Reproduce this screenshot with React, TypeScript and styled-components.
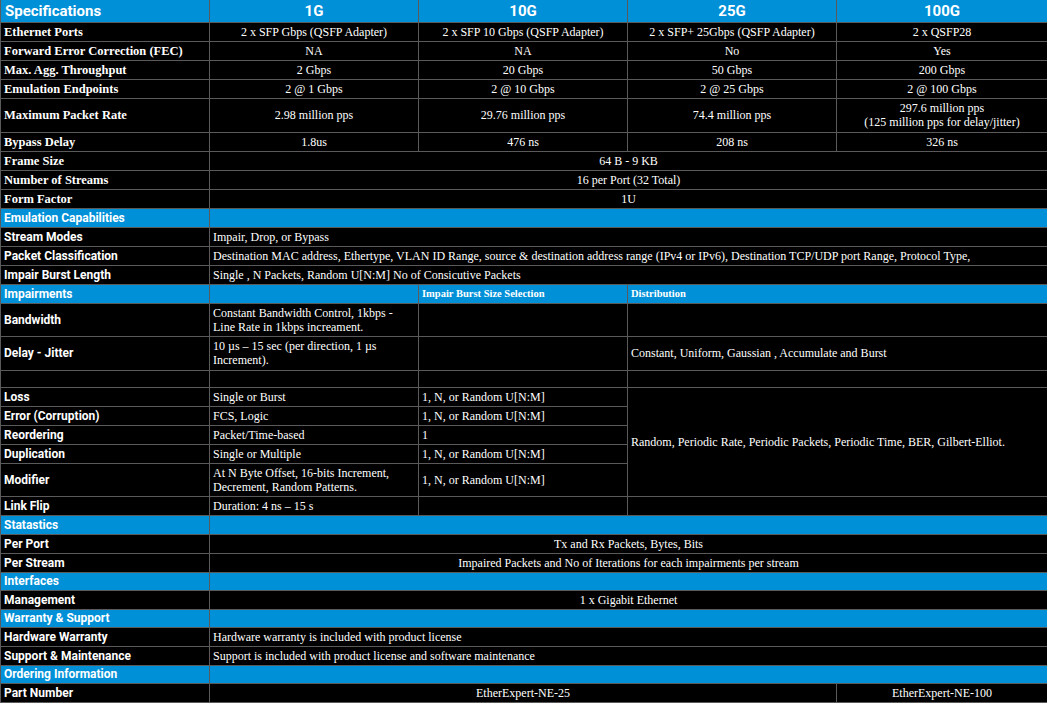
import React from "react";
import styled, { createGlobalStyle } from "styled-components";

const Global = createGlobalStyle`
  body { margin: 0; background: #fff; }
`;

const Table = styled.table`
  width: 1047px;
  table-layout: fixed;
  border-collapse: collapse;
  background: #000;
  color: #fff;
`;

const Row = styled.tr<{ $h?: number }>`
  height: ${p => p.$h ?? 19}px;
`;

const Cell = styled.td<{ $left?: boolean; $bold?: boolean }>`
  border: 1px solid #5a5a5a;
  padding: 0 3px;
  font-family: "Liberation Serif", serif;
  font-size: 12px;
  line-height: 14px;
  text-align: ${p => (p.$left ? "left" : "center")};
  font-weight: ${p => (p.$bold ? 700 : 400)};
  vertical-align: middle;
  overflow: hidden;
`;

const Label = styled(Cell)<{ $sans?: boolean }>`
  text-align: left;
  font-weight: 700;
  font-family: ${p => (p.$sans ? `Roboto, "Liberation Sans", sans-serif` : `"Liberation Serif", serif`)};
  font-size: ${p => (p.$sans ? "12px" : "12.5px")};
  white-space: nowrap;
`;

const Head = styled.td<{ $left?: boolean }>`
  background: #0090d8;
  border: 1px solid #5a5a5a;
  border-top: none;
  padding: 0 4px;
  font-family: Roboto, "Liberation Sans", sans-serif;
  font-weight: 700;
  font-size: 15px;
  text-align: ${p => (p.$left ? "left" : "center")};
`;

const Section = styled.td<{ $serif?: boolean }>`
  background: #0090d8;
  border: 1px solid #5a5a5a;
  padding: 0 3px;
  font-family: ${p => (p.$serif ? `"Liberation Serif", serif` : `Roboto, "Liberation Sans", sans-serif`)};
  font-weight: 700;
  font-size: ${p => (p.$serif ? "10.5px" : "12px")};
  text-align: left;
`;

const top: [string, string[] | string, number?][] = [
  ["Ethernet Ports", ["2 x SFP Gbps (QSFP Adapter)", "2 x SFP 10 Gbps (QSFP Adapter)", "2 x SFP+ 25Gbps (QSFP Adapter)", "2 x QSFP28"]],
  ["Forward Error Correction (FEC)", ["NA", "NA", "No", "Yes"]],
  ["Max. Agg. Throughput", ["2 Gbps", "20 Gbps", "50 Gbps", "200 Gbps"]],
  ["Emulation Endpoints", ["2 @ 1 Gbps", "2 @ 10 Gbps", "2 @ 25 Gbps", "2 @ 100 Gbps"]],
  ["Maximum Packet Rate", ["2.98 million pps", "29.76 million pps", "74.4 million pps", "297.6  million pps\n(125 million pps for delay/jitter)"], 34],
  ["Bypass Delay", ["1.8us", "476 ns", "208 ns", "326 ns"]],
  ["Frame Size", "64 B - 9 KB"],
  ["Number of Streams", "16 per Port (32 Total)"],
  ["Form Factor", "1U"],
];

const SectionRow = ({ title, h = 19 }: { title: string; h?: number }) => (
  <Row $h={h}>
    <Section>{title}</Section>
    <Section colSpan={4} />
  </Row>
);

const LeftRow = ({ label, text }: { label: string; text: string }) => (
  <Row>
    <Label $sans>{label}</Label>
    <Cell colSpan={4} $left>{text}</Cell>
  </Row>
);

const CenterRow = ({ label, text }: { label: string; text: string }) => (
  <Row>
    <Label $sans>{label}</Label>
    <Cell colSpan={4}>{text}</Cell>
  </Row>
);

const rnd = "1, N, or Random U[N:M]";

export default function App() {
  return (
    <>
      <Global />
      <Table>
        <colgroup>
          <col style={{ width: 209 }} />
          <col style={{ width: 209 }} />
          <col style={{ width: 209 }} />
          <col style={{ width: 209 }} />
          <col style={{ width: 211 }} />
        </colgroup>
        <tbody>
          <Row $h={22}>
            <Head $left>Specifications</Head>
            <Head>1G</Head>
            <Head>10G</Head>
            <Head>25G</Head>
            <Head>100G</Head>
          </Row>
          {top.map(([label, vals, h]) => (
            <Row key={label} $h={h}>
              <Label>{label}</Label>
              {Array.isArray(vals) ? (
                vals.map((v, i) => (
                  <Cell key={i} style={{ whiteSpace: "pre-line" }}>{v}</Cell>
                ))
              ) : (
                <Cell colSpan={4}>{vals}</Cell>
              )}
            </Row>
          ))}
          <SectionRow title="Emulation Capabilities" />
          <LeftRow label="Stream Modes" text="Impair, Drop, or Bypass" />
          <LeftRow
            label="Packet Classification"
            text="Destination MAC address, Ethertype, VLAN ID Range, source & destination address range (IPv4 or IPv6), Destination TCP/UDP port Range, Protocol Type,"
          />
          <LeftRow label="Impair Burst Length" text="Single , N Packets, Random U[N:M] No of Consicutive Packets" />
          <Row>
            <Section>Impairments</Section>
            <Section />
            <Section $serif>Impair Burst Size Selection</Section>
            <Section $serif colSpan={2}>Distribution</Section>
          </Row>
          <Row $h={33}>
            <Label $sans>Bandwidth</Label>
            <Cell $left>Constant Bandwidth Control, 1kbps - Line Rate in 1kbps increament.</Cell>
            <Cell />
            <Cell colSpan={2} />
          </Row>
          <Row $h={34}>
            <Label $sans>Delay - Jitter</Label>
            <Cell $left>10 µs – 15 sec (per direction, 1 µs Increment).</Cell>
            <Cell />
            <Cell colSpan={2} $left>Constant, Uniform, Gaussian , Accumulate and Burst</Cell>
          </Row>
          <Row $h={17}>
            <Cell />
            <Cell />
            <Cell />
            <Cell colSpan={2} />
          </Row>
          <Row>
            <Label $sans>Loss</Label>
            <Cell $left>Single or Burst</Cell>
            <Cell $left>{rnd}</Cell>
            <Cell colSpan={2} rowSpan={5} $left>
              Random, Periodic Rate, Periodic Packets, Periodic Time, BER, Gilbert-Elliot.
            </Cell>
          </Row>
          <Row>
            <Label $sans>Error (Corruption)</Label>
            <Cell $left>FCS, Logic</Cell>
            <Cell $left>{rnd}</Cell>
          </Row>
          <Row>
            <Label $sans>Reordering</Label>
            <Cell $left>Packet/Time-based</Cell>
            <Cell $left>1</Cell>
          </Row>
          <Row>
            <Label $sans>Duplication</Label>
            <Cell $left>Single or Multiple</Cell>
            <Cell $left>{rnd}</Cell>
          </Row>
          <Row $h={33}>
            <Label $sans>Modifier</Label>
            <Cell $left>At N Byte Offset, 16-bits Increment, Decrement, Random Patterns.</Cell>
            <Cell $left>{rnd}</Cell>
          </Row>
          <Row>
            <Label $sans>Link Flip</Label>
            <Cell $left>Duration: 4 ns – 15 s</Cell>
            <Cell />
            <Cell colSpan={2} />
          </Row>
          <SectionRow title="Statastics" />
          <CenterRow label="Per Port" text="Tx and Rx Packets, Bytes, Bits" />
          <CenterRow label="Per Stream" text="Impaired Packets and No of Iterations for each impairments per stream" />
          <SectionRow title="Interfaces" h={18} />
          <CenterRow label="Management" text="1 x Gigabit Ethernet" />
          <SectionRow title="Warranty & Support" h={18} />
          <LeftRow label="Hardware Warranty" text="Hardware warranty is included with product license" />
          <LeftRow label="Support & Maintenance" text="Support is included with product license and software maintenance" />
          <SectionRow title="Ordering Information" h={18} />
          <Row>
            <Label $sans>Part Number</Label>
            <Cell colSpan={3}>EtherExpert-NE-25</Cell>
            <Cell>EtherExpert-NE-100</Cell>
          </Row>
        </tbody>
      </Table>
    </>
  );
}
